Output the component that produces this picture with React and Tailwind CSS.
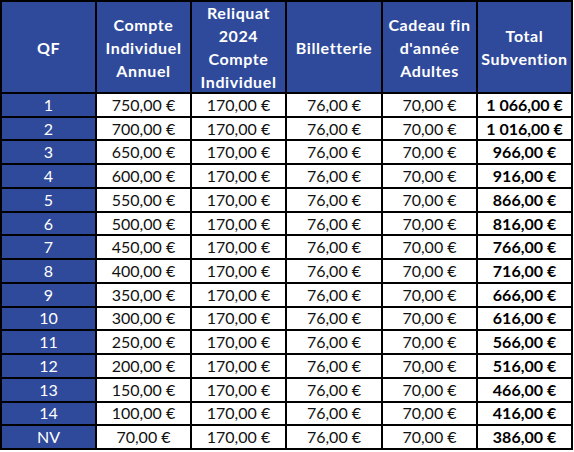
const headers = [
  ["QF"],
  ["Compte", "Individuel", "Annuel"],
  ["Reliquat", "2024", "Compte", "Individuel"],
  ["Billetterie"],
  ["Cadeau fin", "d'année", "Adultes"],
  ["Total", "Subvention"],
];

const comptes = [750, 700, 650, 600, 550, 500, 450, 400, 350, 300, 250, 200, 150, 100];

const fmt = (n) => {
  const s = n.toFixed(2).replace(".", ",");
  const [int, dec] = s.split(",");
  const withSpace = int.replace(/\B(?=(\d{3})+(?!\d))/g, " ");
  return `${withSpace},${dec} €`;
};

const rows = [
  ...comptes.map((c, i) => ({ qf: String(i + 1), compte: c })),
  { qf: "NV", compte: 70 },
];

export default function App() {
  return (
    <div className="w-[574px] h-[452px] bg-white" style={{ fontFamily: "Lato, 'Open Sans', sans-serif" }}>
      <div className="grid w-[573px] h-[450px] bg-black p-[2px] gap-[2px] grid-cols-[93px_93px_93px_94px_93px_93px] grid-rows-[90px_repeat(15,minmax(0,1fr))] text-[16px] leading-[20px]">
        {headers.map((lines, i) => (
          <div key={i} className="bg-[#2f4a9b] text-white font-bold flex flex-col items-center justify-center leading-[23px] tracking-[0.6px]">
            {lines.map((l) => (
              <span key={l}>{l}</span>
            ))}
          </div>
        ))}
        {rows.map((r) => (
          <Row key={r.qf} r={r} />
        ))}
      </div>
    </div>
  );
}

function Row({ r }) {
  const total = r.compte + 170 + 76 + 70;
  return (
    <>
      <div className="bg-[#2f4a9b] text-white flex items-center justify-center">{r.qf}</div>
      <div className="bg-white text-[#111] flex items-center justify-center">{fmt(r.compte)}</div>
      <div className="bg-white text-[#111] flex items-center justify-center">{fmt(170)}</div>
      <div className="bg-white text-[#111] flex items-center justify-center">{fmt(76)}</div>
      <div className="bg-white text-[#111] flex items-center justify-center">{fmt(70)}</div>
      <div className="bg-white text-black font-bold flex items-center justify-center">{fmt(total)}</div>
    </>
  );
}
